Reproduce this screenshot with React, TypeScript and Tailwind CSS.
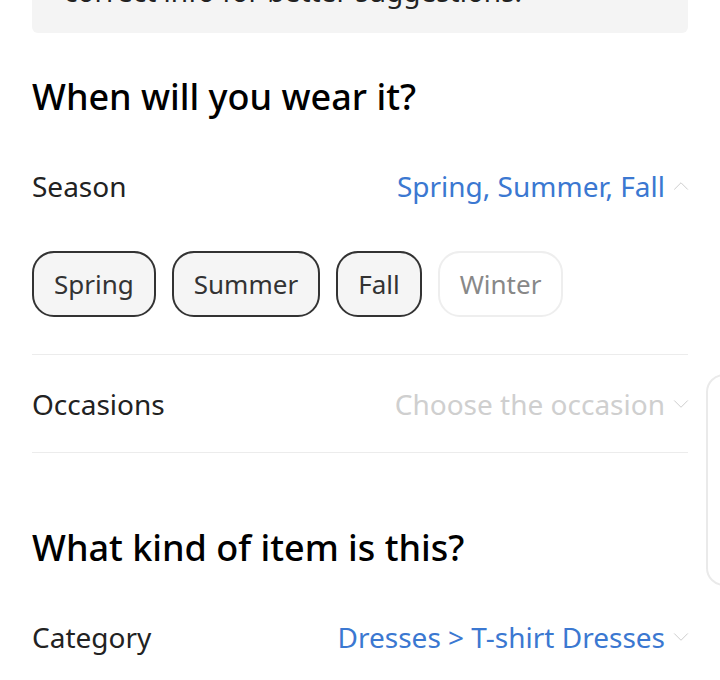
import { ChevronUp, ChevronDown } from "lucide-react";

const seasons = [
  { name: "Spring", on: true },
  { name: "Summer", on: true },
  { name: "Fall", on: true },
  { name: "Winter", on: false },
];

const Row = ({
  label,
  value,
  muted,
  up,
}: {
  label: string;
  value: string;
  muted?: boolean;
  up?: boolean;
}) => {
  return (
    <div className="flex h-[40px] items-center justify-between">
      <span className="text-[28px] text-[#222]">{label}</span>
      <div className="-mr-[6px] flex items-center gap-[3px]">
        <span className={muted ? "text-[28px] text-[#cfcfcf]" : "text-[28px] text-[#3b78d1]"}>
          {value}
        </span>
        {up ? (
          <ChevronUp size={26} strokeWidth={0.9} className="text-[#cccccc]" />
        ) : (
          <ChevronDown size={26} strokeWidth={0.9} className="text-[#cccccc]" />
        )}
      </div>
    </div>
  );
};

export default function App() {
  return (
    <div
      className="relative h-[680px] w-[720px] overflow-hidden bg-white"
      style={{ fontFamily: '"Noto Sans", "Liberation Sans", sans-serif' }}
    >
      <div className="px-[32px]">
        {/* tip box, cut off at the top */}
        <div className="h-[33px] overflow-hidden rounded-b-[6px] bg-[#f4f4f4] px-[32px]">
          <p className="-mt-[28px] text-[28px] leading-[38px] text-[#222]">
            correct info for better suggestions.
          </p>
        </div>

        {/* when */}
        <h2 className="mt-[40px] text-[36px] font-medium leading-[48px] text-black">
          When will you wear it?
        </h2>
        <div className="mt-[45px]">
          <Row label="Season" value="Spring, Summer, Fall" up />
        </div>

        <div className="mt-[45px] flex gap-[16px]">
          {seasons.map((s) => (
            <div
              key={s.name}
              className={
                s.on
                  ? "flex h-[66px] items-center rounded-[22px] border-2 border-[#333] bg-[#f5f5f5] px-[20px] text-[26px] text-[#333]"
                  : "flex h-[66px] items-center rounded-[22px] border-2 border-[#eeeeee] bg-white px-[20px] text-[26px] text-[#888]"
              }
            >
              {s.name}
            </div>
          ))}
        </div>

        <div className="mt-[37px] h-px bg-[#ececec]" />
        <div className="flex h-[97px] flex-col justify-center">
          <Row label="Occasions" value="Choose the occasion" muted />
        </div>
        <div className="h-px bg-[#ececec]" />

        <h2 className="mt-[71px] text-[36px] font-medium leading-[48px] text-black">
          What kind of item is this?
        </h2>
        <div className="mt-[45px]">
          <Row label="Category" value="Dresses > T-shirt Dresses" />
        </div>
      </div>

      {/* floating edge panel */}
      <div className="absolute left-[706px] top-[374px] h-[212px] w-[40px] rounded-l-[18px] border-2 border-[#eaeaea] bg-white" />
    </div>
  );
}
